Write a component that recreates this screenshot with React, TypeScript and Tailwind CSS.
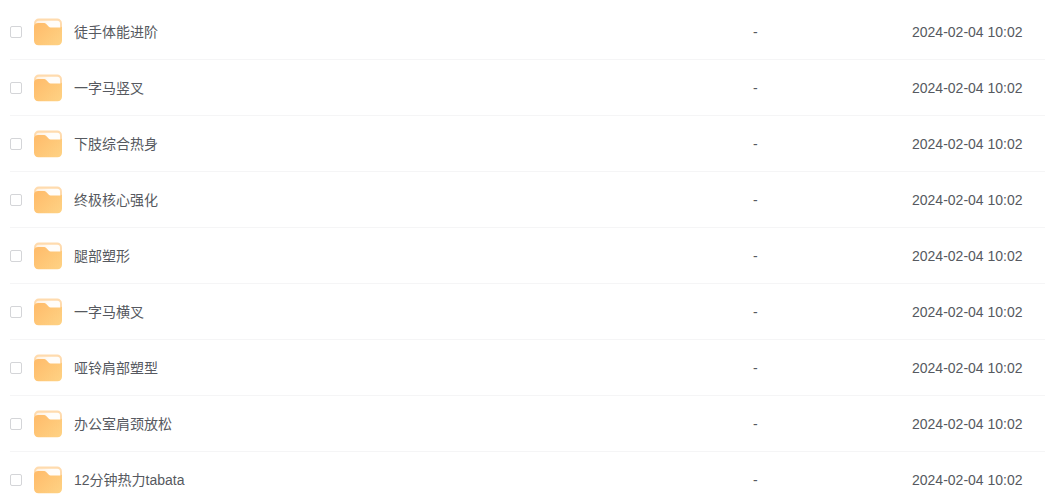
import { useId, useState } from "react"

type Folder = {
  name: string
  size: string
  updatedAt: string
}

const folders: Folder[] = [
  { name: "徒手体能进阶", size: "-", updatedAt: "2024-02-04 10:02" },
  { name: "一字马竖叉", size: "-", updatedAt: "2024-02-04 10:02" },
  { name: "下肢综合热身", size: "-", updatedAt: "2024-02-04 10:02" },
  { name: "终极核心强化", size: "-", updatedAt: "2024-02-04 10:02" },
  { name: "腿部塑形", size: "-", updatedAt: "2024-02-04 10:02" },
  { name: "一字马横叉", size: "-", updatedAt: "2024-02-04 10:02" },
  { name: "哑铃肩部塑型", size: "-", updatedAt: "2024-02-04 10:02" },
  { name: "办公室肩颈放松", size: "-", updatedAt: "2024-02-04 10:02" },
  { name: "12分钟热力tabata", size: "-", updatedAt: "2024-02-04 10:02" },
]

const cell = "h-14 border-b border-[#f5f5f6] p-0"

function FolderIcon() {
  const id = useId()

  return (
    <svg className="h-7 w-7 shrink-0" viewBox="0 0 28 28" fill="none" aria-hidden="true">
      <defs>
        <linearGradient id={`${id}-front`} x1="4" y1="6" x2="25" y2="27" gradientUnits="userSpaceOnUse">
          <stop stopColor="#ffbd6c" />
          <stop offset="1" stopColor="#fed183" />
        </linearGradient>
        <linearGradient id={`${id}-paper`} x1="4" y1="3" x2="14" y2="9" gradientUnits="userSpaceOnUse">
          <stop stopColor="#fff1e0" />
          <stop offset="1" stopColor="#fffdfa" />
        </linearGradient>
      </defs>
      <rect y="0.6" width="28" height="22" rx="4.8" fill="#ffdbae" />
      <rect x="2" y="2.8" width="24" height="12" rx="2.8" fill={`url(#${id}-paper)`} />
      <path
        d="M0 9C0 6.400 1.700 4.900 4.200 4.900h5c1.500 0 2.500.4 3.500 1.500l1.700 1.900c.9 1 1.700 1.300 3 1.300h7.600c1.900 0 3-.4 3-1.600v14.700c0 2.700-1.800 4.500-4.500 4.500h-19C1.800 27.200 0 25.400 0 22.700z"
        fill={`url(#${id}-front)`}
      />
    </svg>
  )
}

export default function App() {
  const [selected, setSelected] = useState<string[]>([])

  const toggle = (name: string) => {
    setSelected((prev) => (prev.includes(name) ? prev.filter((n) => n !== name) : [...prev, name]))
  }

  return (
    <main className="h-screen overflow-hidden bg-white pt-1 pl-2.5 font-['Liberation_Sans','Noto_Sans_CJK_SC',sans-serif] text-sm text-[#565960]">
      <table className="w-full table-fixed border-separate border-spacing-0 text-left">
        <colgroup>
          <col className="w-6" />
          <col />
          <col className="w-[159px]" />
          <col className="w-[133px]" />
        </colgroup>
        <tbody>
          {folders.map((folder) => (
            <tr key={folder.name} className="hover:bg-gray-50">
              <td className={cell}>
                <input
                  type="checkbox"
                  aria-label={folder.name}
                  checked={selected.includes(folder.name)}
                  onChange={() => toggle(folder.name)}
                  className="block h-3 w-3 cursor-pointer appearance-none rounded-xs border border-[#d4d5d8] bg-white checked:border-blue-500 checked:bg-blue-500"
                />
              </td>
              <td className={cell}>
                <div className="flex items-center gap-3">
                  <FolderIcon />
                  <a href="#" className="truncate hover:text-blue-500">
                    {folder.name}
                  </a>
                </div>
              </td>
              <td className={cell}>{folder.size}</td>
              <td className={`${cell} whitespace-nowrap`}>{folder.updatedAt}</td>
            </tr>
          ))}
        </tbody>
      </table>
    </main>
  )
}
